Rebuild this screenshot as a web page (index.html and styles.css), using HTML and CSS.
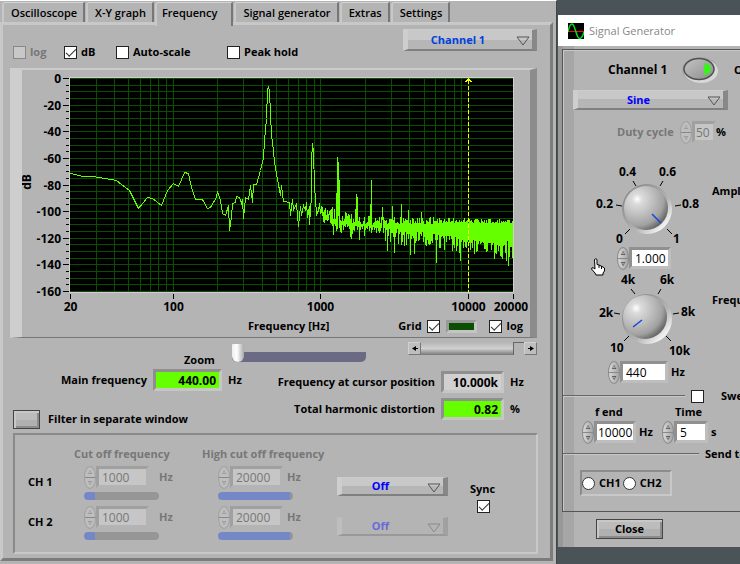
FILE: index.html
```html
<!DOCTYPE html>
<html lang="en">
<head>
    <meta charset="UTF-8">
    <meta name="viewport" content="width=device-width, initial-scale=1.0">
    <title>Soundcard Scope</title>
    <link rel="stylesheet" href="styles.css">
</head>
<body>

<main class="scope">
    <nav class="tabs">
        <button type="button" class="tab">Oscilloscope</button>
        <button type="button" class="tab">X-Y graph</button>
        <button type="button" class="tab active">Frequency</button>
        <button type="button" class="tab">Signal generator</button>
        <button type="button" class="tab">Extras</button>
        <button type="button" class="tab">Settings</button>
    </nav>

    <section class="panel">
        <div class="toolbar">
            <div class="checks">
                <label class="check disabled"><input type="checkbox" disabled>log</label>
                <label class="check"><input type="checkbox" checked>dB</label>
                <label class="check"><input type="checkbox">Auto-scale</label>
                <label class="check"><input type="checkbox">Peak hold</label>
            </div>
            <div class="ring soft">
                <select aria-label="Channel"><option>Channel 1</option></select>
                <svg class="arrow" width="14" height="10"><path d="M1 1h12L7 9z"/></svg>
            </div>
        </div>

        <div class="graph">
            <svg id="spectrum" width="508" height="246"></svg>
            <div class="graph-foot">
                <span class="axis-name">Frequency [Hz]</span>
                <label class="check rev">Grid<input type="checkbox" checked></label>
                <button type="button" class="swatch" aria-label="Grid color"></button>
                <label class="check"><input type="checkbox" checked>log</label>
            </div>
        </div>

        <div class="zoom-row">
            <label for="zoom">Zoom</label>
            <input type="range" id="zoom" class="zoom" min="0" max="100" value="0">
            <div class="scrollbar">
                <button type="button" aria-label="Left"><svg width="6" height="7"><path d="M0 3.5L4 1v5zM4 3h2v1H4z"/></svg></button>
                <div class="scroll-track"><i class="scroll-thumb"></i></div>
                <button type="button" aria-label="Right"><svg width="6" height="7"><path d="M6 3.5L2 1v5zM0 3h2v1H0z"/></svg></button>
            </div>
        </div>

        <div class="values">
            <div class="value main-freq">
                <label for="mainFreq">Main frequency</label>
                <output id="mainFreq" class="readout green">440.00</output>
                <span>Hz</span>
            </div>
            <div class="value">
                <label for="cursorFreq">Frequency at cursor position</label>
                <output id="cursorFreq" class="readout">10.000k</output>
                <span>Hz</span>
            </div>
            <div class="filter-switch">
                <button type="button" id="filterWindow" class="bevel"></button>
                <label for="filterWindow">Filter in separate window</label>
            </div>
            <div class="value">
                <label for="thd">Total harmonic distortion</label>
                <output id="thd" class="readout green">0.82</output>
                <span>%</span>
            </div>
        </div>

        <div class="filters">
            <span></span>
            <span class="head">Cut off frequency</span>
            <span class="head">High cut off frequency</span>

            <span class="ch">CH 1</span>
            <div class="cut disabled">
                <div class="number">
                    <span class="spin"><button type="button" disabled>▵</button><button type="button" disabled>▿</button></span>
                    <input type="text" value="1000" aria-label="CH 1 cut off frequency" disabled><span class="unit">Hz</span>
                </div>
                <input type="range" class="bar low" aria-label="CH 1 cut off" disabled>
            </div>
            <div class="cut high disabled">
                <div class="number">
                    <span class="spin"><button type="button" disabled>▵</button><button type="button" disabled>▿</button></span>
                    <input type="text" value="20000" aria-label="CH 1 high cut off frequency" disabled><span class="unit">Hz</span>
                </div>
                <input type="range" class="bar full" aria-label="CH 1 high cut off" disabled>
            </div>
            <div class="ring">
                <select aria-label="CH 1 filter"><option>Off</option></select>
                <svg class="arrow" width="14" height="10"><path d="M1 1h12L7 9z"/></svg>
            </div>

            <span class="ch">CH 2</span>
            <div class="cut disabled">
                <div class="number">
                    <span class="spin"><button type="button" disabled>▵</button><button type="button" disabled>▿</button></span>
                    <input type="text" value="1000" aria-label="CH 2 cut off frequency" disabled><span class="unit">Hz</span>
                </div>
                <input type="range" class="bar low" aria-label="CH 2 cut off" disabled>
            </div>
            <div class="cut high disabled">
                <div class="number">
                    <span class="spin"><button type="button" disabled>▵</button><button type="button" disabled>▿</button></span>
                    <input type="text" value="20000" aria-label="CH 2 high cut off frequency" disabled><span class="unit">Hz</span>
                </div>
                <input type="range" class="bar full" aria-label="CH 2 high cut off" disabled>
            </div>
            <div class="ring faded">
                <select aria-label="CH 2 filter" disabled><option>Off</option></select>
                <svg class="arrow" width="14" height="10"><path d="M1 1h12L7 9z"/></svg>
            </div>

            <label class="sync">Sync<input type="checkbox" checked></label>
        </div>
    </section>
</main>

<aside class="generator">
    <header class="titlebar">
        <svg width="16" height="16">
            <rect width="16" height="16" fill="#000"/>
            <rect y="8" width="16" height="1" fill="#f00"/>
            <path d="M0 9C2-1 5-1 7 6l2 6c2 6 5 4 7-3" fill="none" stroke="#00e020" stroke-width="1.5"/>
        </svg>
        <span>Signal Generator</span>
    </header>

    <div class="gen-body">
        <div class="gen-panel">
            <div class="gen-channel">
                <span class="name">Channel 1</span>
                <button type="button" class="power" aria-label="Channel 1 on">
                    <svg width="38" height="28">
                        <ellipse cx="19" cy="14" rx="18" ry="13" fill="#a8a8a8"/>
                        <ellipse cx="20" cy="15" rx="17" ry="12" fill="#d8d8d8"/>
                        <ellipse cx="18" cy="13" rx="15" ry="10.5" fill="url(#lens)" stroke="#505050" stroke-width="1.5"/>
                        <path d="M23 7q7 1 7 6t-7 6z" fill="#3cf01e"/>
                    </svg>
                </button>
                <span>On</span>
            </div>

            <div class="ring">
                <select aria-label="Waveform"><option>Sine</option></select>
                <svg class="arrow" width="14" height="10"><path d="M1 1h12L7 9z"/></svg>
            </div>

            <div class="duty number disabled">
                <label for="duty">Duty cycle</label>
                <span class="spin"><button type="button" disabled>▵</button><button type="button" disabled>▿</button></span>
                <input type="text" id="duty" value="50" disabled><span class="unit">%</span>
            </div>

            <div class="dial">
                <svg width="122" height="84">
                    <defs>
                        <radialGradient id="cap" cx="0.3" cy="0.3" r="0.75">
                            <stop offset="0" stop-color="#fff"/>
                            <stop offset="0.15" stop-color="#dcdcdc"/>
                            <stop offset="0.5" stop-color="#bdbdbd"/>
                            <stop offset="0.8" stop-color="#a2a2a2"/>
                            <stop offset="1" stop-color="#6a6a6a"/>
                        </radialGradient>
                        <linearGradient id="well" x1="0" y1="0" x2="1" y2="1">
                            <stop offset="0.2" stop-color="#8f8f8f"/>
                            <stop offset="0.6" stop-color="#b4b4b4"/>
                            <stop offset="0.85" stop-color="#f4f4f4"/>
                        </linearGradient>
                        <linearGradient id="lens" x1="0" y1="0" x2="1" y2="1">
                            <stop offset="0" stop-color="#c4c4c4"/>
                            <stop offset="1" stop-color="#8c8c8c"/>
                        </linearGradient>
                    </defs>
                    <circle cx="57" cy="46" r="25" fill="url(#well)"/>
                    <circle cx="56" cy="45" r="22" fill="url(#cap)"/>
                    <path d="M62 51l9 9" stroke="#1446dc" stroke-width="1.5"/>
                    <path class="mark" d="M43 18l3 5M73 18l-3 5M26 42l6 1M85 43l6-1M35 71l5-5M77 66l5 5"/>
                    <text x="29" y="13">0.4</text><text x="69" y="13">0.6</text>
                    <text x="6" y="45">0.2</text><text x="92" y="45">0.8</text>
                    <text x="26" y="80">0</text><text x="83" y="80">1</text>
                </svg>
                <span>Amplitude</span>
            </div>
            <div class="number amp">
                <span class="spin"><button type="button">▵</button><button type="button">▿</button></span>
                <input type="text" value="1.000" aria-label="Amplitude">
            </div>

            <div class="dial second">
                <svg width="122" height="88">
                    <circle cx="57" cy="47" r="25" fill="url(#well)"/>
                    <circle cx="55" cy="45" r="22" fill="url(#cap)"/>
                    <path d="M52 48l-9 7" stroke="#1446dc" stroke-width="1.5"/>
                    <path class="mark" d="M41 17l4 5M71 17l-3 5M24 41l6 1M83 42l6-1M34 69l5-5M76 64l5 5"/>
                    <text x="31" y="12">4k</text><text x="70" y="12">6k</text>
                    <text x="9" y="45">2k</text><text x="91" y="44">8k</text>
                    <text x="20" y="80">10</text><text x="79" y="83">10k</text>
                </svg>
                <span>Frequency</span>
            </div>
            <div class="number freq">
                <span class="spin"><button type="button">▵</button><button type="button">▿</button></span>
                <input type="text" value="440" aria-label="Frequency"><span class="unit">Hz</span>
            </div>

            <label class="rule sweep"><i></i><input type="checkbox">Sweep</label>

            <div class="sweep-fields">
                <label for="fEnd">f end</label>
                <label for="time">Time</label>
                <div class="number fend">
                    <span class="spin"><button type="button">▵</button><button type="button">▿</button></span>
                    <input type="text" id="fEnd" value="10000"><span class="unit">Hz</span>
                </div>
                <div class="number time">
                    <span class="spin"><button type="button">▵</button><button type="button">▿</button></span>
                    <input type="text" id="time" value="5"><span class="unit">s</span>
                </div>
            </div>

            <div class="rule send"><i></i>Send to</div>

            <div class="outputs">
                <label><input type="radio" name="out">CH1</label>
                <label><input type="radio" name="out">CH2</label>
            </div>
        </div>
        <button type="button" class="bevel close">Close</button>
    </div>
</aside>

<svg class="pointer" width="16" height="18">
    <path d="M4.5 1.5q1.500-1.500 2.500 0v5l2 .5 2 1 2 1 1.500 1v3l-1.500 2v2h-7l-1-2-3.500-4q0-2 2-1l1.500 1z" fill="#fff" stroke="#000"/>
    <path d="M9 7v3M11.500 8v3" stroke="#000"/>
</svg>

<script src="spectrum.js"></script>
</body>
</html>
```

FILE: styles.css
```css
* {
    box-sizing: border-box;
}
body {
    margin: 0;
    min-height: 100vh;
    display: grid;
    grid-template-columns: 1fr 183px;
    background: #4a5358;
    font: 700 11px/16px "Open Sans", "Noto Sans", sans-serif;
    color: #000;
    overflow: hidden;
}
button, input, select {
    font: inherit;
    color: inherit;
    margin: 0;
    padding: 0;
    border: 0;
    border-radius: 0;
    background: none;
}
svg {
    display: block;
    flex: none;
}
svg text {
    font-size: 12px;
    fill: #000;
}

/* scope window */
.scope {
    display: flex;
    flex-direction: column;
    background: #b4b4b4;
    border-top: 1px solid #fff;
    border-right: 1px solid #444;
    padding: 1px 3px 3px 0;
}
.tabs {
    display: flex;
    gap: 1px;
    padding-left: 2px;
    height: 20px;
    font-weight: 600;
}
.tab {
    height: 20px;
    padding: 0 6px 0 7px;
    line-height: 20px;
    background: #b4b4b4;
    border-top: 1px solid #d4d4d4;
    border-left: 2px solid #c8c8c8;
    border-right: 2px solid #777;
    border-top-left-radius: 3px;
}
.tab.active {
    position: relative;
    height: 24px;
    padding: 0 14px 4px 5px;
}
.panel {
    flex: 1;
    padding: 4px 13px 0 7px;
    border: 3px solid;
    border-color: #c8c8c8 #7c7c7c #7c7c7c #c8c8c8;
}
.toolbar {
    display: flex;
    justify-content: space-between;
    height: 39px;
}
.checks {
    display: grid;
    grid-template-columns: 51px 52px 111px auto;
    padding: 15px 0 0 3px;
}
.check {
    display: flex;
    align-items: center;
    gap: 4px;
    height: 16px;
}
.check.disabled {
    color: #777;
}
input[type=checkbox] {
    appearance: none;
    flex: none;
    width: 13px;
    height: 13px;
    border: 1px solid #222;
    background: #fff;
}
input[type=checkbox]:checked::before {
    content: "";
    display: block;
    width: 9px;
    height: 4px;
    margin: 2px 0 0 1px;
    border: solid #333;
    border-width: 0 0 1px 1px;
    transform: rotate(-45deg);
}
input[type=checkbox]:disabled {
    background: #c8c8c8;
    border-color: #888;
}

/* drop-downs */
.ring {
    position: relative;
    width: 111px;
    height: 19px;
}
.ring select {
    appearance: none;
    display: block;
    width: 100%;
    height: 100%;
    padding-right: 24px;
    text-align: center;
    text-align-last: center;
    color: #00f;
    background: linear-gradient(#c8c8c8 50%, #b6b6b6 50%);
    border: solid;
    border-width: 1px 5px 2px 5px;
    border-color: #ccc #888 #808080 #cecece;
}
.ring.soft {
    width: 134px;
    height: 22px;
}
.ring.soft select {
    color: #0041dc;
}
.ring .arrow {
    position: absolute;
    right: 7px;
    top: 50%;
    margin-top: -4px;
    pointer-events: none;
    fill: none;
    stroke: #555;
}
.ring.faded select {
    color: #6a6ad8;
    opacity: 1;
    background: #b4b4b4;
    border-color: #b4b4b4 #a0a0a0 #999 #bebebe;
}
.ring.faded .arrow {
    stroke: #8a8a8a;
}

/* graph */
.graph {
    height: 270px;
    border: solid;
    border-width: 2px 7px 1px 12px;
    border-color: #ccc #8c8c8c #777 #cecece;
    overflow: hidden;
}
#spectrum {
    shape-rendering: crispEdges;
}
#spectrum .grid {
    stroke: #0a4f00;
    fill: none;
}
#spectrum .trace {
    stroke: #6f0;
    fill: none;
}
#spectrum .cursor {
    stroke: #ff0;
    stroke-dasharray: 4 2;
    fill: none;
}
#spectrum .tick {
    stroke: #000;
}
.graph-foot {
    display: flex;
    align-items: center;
    gap: 6px;
    height: 20px;
    padding-right: 7px;
}
.graph-foot .check {
    gap: 5px;
}
.graph-foot .check.rev {
    margin-left: auto;
}
.axis-name {
    padding-left: 226px;
}
.swatch {
    width: 31px;
    height: 13px;
    margin-right: 6px;
    background: #0a5000;
    border: 3px solid;
    border-color: #999 #c4c4c4 #c4c4c4 #999;
}

/* zoom + scroll */
.zoom-row {
    display: flex;
    height: 30px;
    padding-left: 174px;
}
.zoom-row label {
    width: 48px;
    padding-top: 14px;
}
.zoom {
    appearance: none;
    width: 134px;
    height: 18px;
    margin-top: 6px;
    background: linear-gradient(#6a6a84, #6a6a84) 0 8px / 100% 10px no-repeat;
    border-radius: 0 0 5px 5px;
}
.zoom::-webkit-slider-thumb {
    appearance: none;
    width: 12px;
    height: 18px;
    background: linear-gradient(90deg, #eee, #fff 40%, #a8a8a8);
    border-radius: 1px 1px 6px 6px;
}
.scrollbar {
    display: flex;
    width: 129px;
    height: 13px;
    margin: 4px 0 0 auto;
}
.scrollbar button {
    width: 13px;
    display: grid;
    place-items: center;
    background: #bebebe;
    border: 1px solid;
    border-color: #d0d0d0 #777 #777 #d0d0d0;
}
.scroll-track {
    flex: 1;
    display: flex;
    justify-content: flex-end;
    background: linear-gradient(#b4b4b4, #d0d0d0 50%, #777);
}
.scroll-thumb {
    width: 11px;
    background: #b4b4b4;
    border: solid #666;
    border-width: 1px 0 0 1px;
}

/* readouts */
.values {
    display: grid;
    grid-template-columns: 257px 1fr;
    grid-template-rows: 27px 36px;
}
.value {
    display: grid;
    grid-template-columns: 1fr 63px 27px;
    align-items: start;
    column-gap: 6px;
    padding-top: 3px;
    line-height: 22px;
    text-align: right;
    white-space: nowrap;
}
.value span {
    text-align: left;
}
.value.main-freq {
    grid-template-columns: 137px 69px auto;
    padding-top: 1px;
}
.value .readout {
    height: 22px;
    padding-right: 3px;
    font-size: 12px;
    line-height: 17px;
    background: #d0d0d0;
    border: 3px solid;
    border-color: #8f8f8f #c6c6c6 #c6c6c6 #8f8f8f;
}
.value .readout.green {
    background: #6f0;
}
.filter-switch {
    display: flex;
    align-items: center;
    gap: 8px;
    padding: 12px 0 0 3px;
}
.bevel {
    width: 27px;
    height: 19px;
    background: linear-gradient(#bcbcbc 50%, #b0b0b0 50%);
    border: 1px solid #444;
    box-shadow: inset 2px 2px 0 #c8c8c8, inset -2px -2px 0 #8c8c8c;
}

/* filter box */
.filters {
    display: grid;
    grid-template-columns: 44px 128px 135px 130px 1fr;
    grid-template-rows: 22px 40px 40px;
    height: 121px;
    margin: 2px -1px 0 3px;
    padding: 8px 0 0 13px;
    border: 2px solid;
    border-color: #8a8a8a #c8c8c8 #c8c8c8 #8a8a8a;
    white-space: nowrap;
}
.head {
    padding: 3px 0 0 2px;
    color: #777;
}
.ch {
    grid-column: 1;
    padding-top: 9px;
}
.cut {
    padding-left: 12px;
}
.cut.high {
    padding-left: 18px;
}
.filters .ring {
    margin: 12px 0 0 2px;
}
.sync {
    grid-column: 5;
    grid-row: 2 / 4;
    display: flex;
    flex-direction: column;
    gap: 3px;
    padding: 16px 0 0 5px;
}
.sync input {
    margin-left: 7px;
}

/* number fields with spin buttons */
.number {
    display: flex;
    align-items: center;
    height: 24px;
}
.spin {
    display: flex;
    flex: none;
    flex-direction: column;
    width: 12px;
    height: 23px;
    border: 1px solid #8a8a8a;
    border-radius: 6px / 11px;
    overflow: hidden;
    background: linear-gradient(90deg, #d8d8d8, #a4a4a4);
}
.spin button {
    height: 11px;
    font: 8px/10px "DejaVu Sans", sans-serif;
    color: #222;
}
.spin button + button {
    border-top: 1px solid #888;
}
.number input {
    flex: none;
    width: 53px;
    height: 22px;
    padding-left: 3px;
    font-size: 12px;
    font-weight: 400;
    background: #fff;
    border: 3px solid;
    border-color: #909090 #bebebe #bebebe #909090;
}
.unit {
    padding-left: 3px;
}
.disabled .unit, .disabled label {
    color: #777;
}
.disabled .spin {
    background: #bebebe;
    border-color: #a0a0a0;
}
.disabled .spin button {
    color: #888;
}
.number input:disabled {
    color: #777;
    background: #c6c6c6;
    border-color: #a0a0a0 #b4b4b4 #b4b4b4 #a0a0a0;
}
.cut .unit {
    padding-left: 10px;
}
.cut.high .unit {
    padding-left: 4px;
}
.bar {
    appearance: none;
    display: block;
    width: 75px;
    height: 8px;
    margin-top: 3px;
    border-radius: 4px;
}
.bar::-webkit-slider-thumb {
    appearance: none;
    width: 0;
}
.bar.low {
    background: linear-gradient(90deg, #7488c8 11px, #969696 11px);
}
.bar.full {
    background: linear-gradient(90deg, #7488c8 72px, #969696 72px);
}

/* signal generator window */
.generator {
    align-self: start;
    margin: 15px 0 0 1px;
    background: #b4b4b4;
    overflow: hidden;
    white-space: nowrap;
}
.titlebar {
    display: flex;
    align-items: center;
    gap: 5px;
    height: 31px;
    padding-left: 10px;
    background: #fff;
    font-size: 11px;
    font-weight: 400;
    color: #888;
}
.gen-body {
    padding: 3px 0 8px 4px;
    background: linear-gradient(90deg, #989898 5px, #a6a6a6 5px, #a6a6a6 16px, #b4b4b4 16px);
}
.gen-panel {
    padding-bottom: 15px;
    border: solid #555;
    border-width: 1px 0 1px 1px;
    box-shadow: inset 1px 1px 0 #c8c8c8;
}
.gen-channel {
    display: flex;
    align-items: center;
    height: 40px;
    padding-left: 45px;
}
.gen-channel .name {
    flex: none;
    width: 73px;
    font-size: 12px;
}
.power {
    margin-right: 15px;
}
.gen-panel .ring {
    width: 155px;
    height: 20px;
    margin-left: 10px;
}
.duty {
    margin: 10px 0 19px;
    padding-left: 54px;
}
.duty label {
    width: 63px;
}
.duty .unit {
    color: #000;
    padding-left: 0;
}
.number.duty input {
    width: 24px;
    padding-left: 1px;
}
.dial {
    display: flex;
    padding-left: 27px;
}
.dial.second {
    margin-top: 3px;
}
.dial .mark {
    stroke: #000;
    fill: none;
}
.dial span {
    padding-top: 20px;
}
.amp {
    padding-left: 54px;
}
.number.amp {
    height: 22px;
}
.number.amp input, .number.fend input {
    width: 42px;
}
.number.fend input {
    padding-left: 1px;
}
.freq {
    padding-left: 45px;
}
.number.freq input {
    width: 48px;
}
.rule {
    display: flex;
    align-items: center;
    gap: 6px;
    height: 16px;
}
.rule i {
    flex: none;
    width: 122px;
    height: 2px;
    background: #666;
    border-bottom: 1px solid #c8c8c8;
}
.rule input {
    margin-right: 11px;
}
.rule.send i {
    width: 136px;
}
.sweep {
    margin-top: 4px;
}
.sweep-fields {
    display: grid;
    grid-template-columns: 80px auto;
    padding: 0 0 2px 19px;
}
.sweep-fields > label {
    padding-left: 13px;
}
.number.time input {
    width: 34px;
}
.outputs {
    display: flex;
    gap: 2px;
    width: 92px;
    height: 26px;
    margin: 8px 0 0 17px;
    border: 2px solid;
    border-color: #8c8c8c #c8c8c8 #c8c8c8 #8c8c8c;
}
.outputs label {
    display: flex;
    align-items: center;
    gap: 4px;
}
.outputs input {
    appearance: none;
    width: 13px;
    height: 13px;
    border: 1px solid #333;
    border-radius: 50%;
    background: #fff;
}
.close {
    display: block;
    width: 67px;
    height: 20px;
    margin: 7px 0 0 34px;
}
.pointer {
    position: absolute;
    left: 590px;
    top: 258px;
}
```

FILE: spectrum.js
```js
const svg = document.getElementById('spectrum');
const left = 48, top0 = 8, width = 443, height = 214;
const decade = width / 3;

function add(tag, attrs, text) {
    const el = document.createElementNS('http://www.w3.org/2000/svg', tag);
    for (const key in attrs) el.setAttribute(key, attrs[key]);
    if (text !== undefined) el.textContent = text;
    svg.appendChild(el);
}
const xOf = f => Math.floor(left + decade * Math.log10(f / 20)) + 0.5;
const yOf = db => Math.round(top0 - db / 160 * (height - 1)) + 0.5;

add('rect', { x: left - 1, y: top0 - 1, width: width + 2, height: height + 2, fill: '#d0d0d0' });
add('rect', { x: left, y: top0, width: width, height: height, fill: '#000' });

// grid and ticks
let grid = '', ticks = '';
for (let db = 0; db >= -160; db -= 5) {
    grid += `M${left} ${yOf(db)}h${width}`;
    const len = db % 20 === 0 ? 6 : 3;
    ticks += `M${left - 1 - len} ${yOf(db)}h${len}`;
    if (db % 20 === 0) {
        add('text', { x: left - 9, y: yOf(db) + 4, 'text-anchor': 'end' }, db);
    }
}
for (let d = 10; d <= 10000; d *= 10) {
    for (let k = 1; k < 10; k++) {
        const f = d * k;
        if (f > 20 && f < 20000) grid += `M${xOf(f)} ${top0}v${height}`;
    }
}
add('path', { d: grid, class: 'grid' });
[20, 100, 1000, 10000, 20000].forEach(f => {
    // the last label leans left to stay inside the frame
    ticks += `M${xOf(f)} 224v5`;
    add('text', { x: Math.min(xOf(f), 489), y: 241, 'text-anchor': 'middle' }, f);
});
add('path', { d: ticks, class: 'tick' });
add('text', { x: 9, y: 112, 'text-anchor': 'middle', transform: 'rotate(-90 9 112)' }, 'dB');

// measured curve up to 1 kHz
const curve = [
    48,103, 61,106, 71,106, 82,108, 94,110, 99,114, 107,120, 116,138, 125,127, 130,128,
    139,135, 145,120, 151,113, 156,116, 162,102, 166,103, 169,117, 173,129, 180,129,
    185,138, 188,137, 194,127, 195,121, 198,130, 200,143, 203,145, 206,135, 207,160,
    209,146, 210,133, 213,132, 214,126, 217,127, 219,133, 220,129, 221,148, 223,127,
    226,129, 228,115, 230,132, 231,114, 234,114, 238,100, 241,87, 242,70, 244,48,
    245,20, 246,16, 247,20, 248,44, 249,64, 251,80, 252,92, 255,109, 258,125, 259,115,
    261,131, 267,132, 268,145, 270,129, 271,140, 274,133, 275,145, 276,156, 278,136,
    279,145, 281,135, 283,140, 284,132, 285,147, 287,136, 287,154, 289,125, 289,90,
    290,73, 291,82, 292,115, 294,144, 296,140, 297,133, 298,143
];
let path = 'M' + curve.map(v => v + 0.5).join(' ');

// noise floor above 1 kHz
let seed = 11;
function rnd() {
    seed = (seed * 16807) % 2147483647;
    return seed / 2147483647;
}
const peaks = { 310: 137, 315: 87, 316: 92, 317: 110, 334: 124, 335: 127, 349: 110, 360: 137, 370: 136, 379: 134, 386: 140, 399: 142 };
const dips = { 313: 156, 331: 160, 348: 158, 360: 150, 365: 181, 372: 183, 380: 172, 388: 185, 392: 184, 408: 174, 414: 193, 427: 170, 434: 181, 438: 191, 450: 178, 462: 179, 472: 189, 478: 186, 485: 171, 486: 196, 490: 188 };
for (let x = 299; x < left + width; x++) {
    const t = (x - 299) / 192;
    const base = Math.min(1, (x - 299) / 40);
    let hi = 136 + base * 9 + t * 4 + rnd() * (11 - 7 * t);
    let lo = 150 + base * 3 + Math.pow(t, 1.5) * 24 + Math.pow(rnd(), 2) * 16;
    if (x < 325) lo = hi + 3 + rnd() * 14;
    if (peaks[x]) hi = peaks[x];
    if (dips[x]) lo = dips[x];
    path += `L${x + 0.5} ${hi.toFixed(1)}V${lo.toFixed(1)}`;
}
add('path', { d: path, class: 'trace' });

// cursor
const cx = xOf(10000);
add('path', { d: `M${cx} ${top0 + 2}V${top0 + height}`, class: 'cursor' });
add('path', { d: `M${cx - 3} ${top0 + 4}l3-3 3 3`, stroke: '#ff0', fill: 'none' });
```
